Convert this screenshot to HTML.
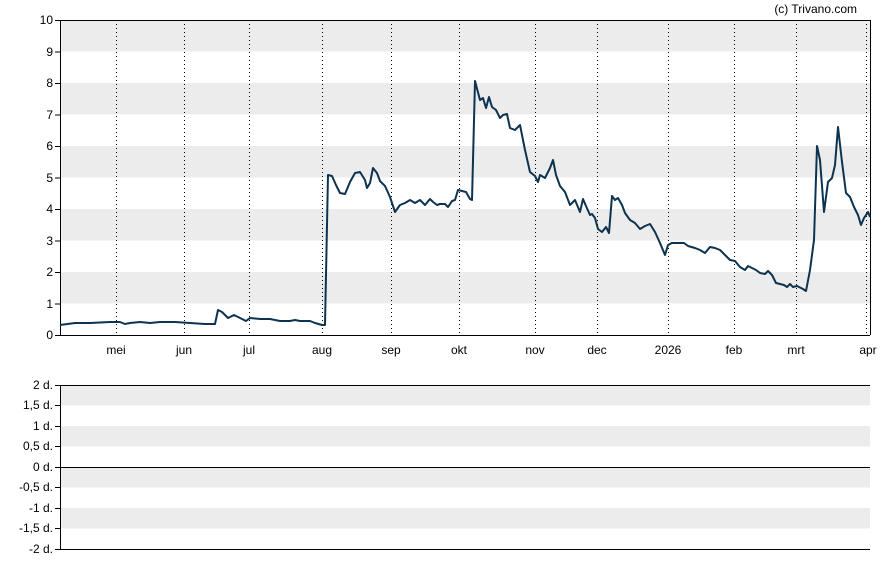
<!DOCTYPE html>
<html><head><meta charset="utf-8"><style>
html,body{margin:0;padding:0;background:#fff;}
svg text{font-family:"Liberation Sans",sans-serif;font-size:12px;fill:#000;}
</style></head><body>
<svg width="888" height="565" viewBox="0 0 888 565" xmlns="http://www.w3.org/2000/svg">
<g fill="#ececec">
<rect x="60" y="20" width="810" height="31.5"/>
<rect x="60" y="83" width="810" height="31.5"/>
<rect x="60" y="146" width="810" height="31.5"/>
<rect x="60" y="209" width="810" height="31.5"/>
<rect x="60" y="272" width="810" height="31.5"/>
<rect x="60" y="385" width="810" height="20.5"/>
<rect x="60" y="426" width="810" height="20.5"/>
<rect x="60" y="467" width="810" height="20.5"/>
<rect x="60" y="508" width="810" height="20.5"/>
</g>
<g stroke="#000" stroke-width="1" stroke-dasharray="1,3">
<line x1="116.5" y1="20" x2="116.5" y2="335"/>
<line x1="184.5" y1="20" x2="184.5" y2="335"/>
<line x1="249.5" y1="20" x2="249.5" y2="335"/>
<line x1="322.5" y1="20" x2="322.5" y2="335"/>
<line x1="391.5" y1="20" x2="391.5" y2="335"/>
<line x1="459.5" y1="20" x2="459.5" y2="335"/>
<line x1="535.5" y1="20" x2="535.5" y2="335"/>
<line x1="597.5" y1="20" x2="597.5" y2="335"/>
<line x1="668.5" y1="20" x2="668.5" y2="335"/>
<line x1="734.5" y1="20" x2="734.5" y2="335"/>
<line x1="796.5" y1="20" x2="796.5" y2="335"/>
<line x1="866.5" y1="20" x2="866.5" y2="335"/>
</g>
<g stroke="#000" stroke-width="1" fill="none">
<path d="M60.5 20V335.5H870M60 20.5H870M870.5 20V335"/>
<path d="M55 20.5h5M55 52h5M55 83.5h5M55 115h5M55 146.5h5M55 178h5M55 209.5h5M55 241h5M55 272.5h5M55 304h5M55 335.5h5"/>
<path d="M60.5 385V549.5H870M60 385.5H870M60 467.5H870"/>
<path d="M55 385.5h5M55 405.5h5M55 426.5h5M55 446.5h5M55 467.5h5M55 487.5h5M55 508.5h5M55 528.5h5M55 549.5h5"/>
</g>
<g text-anchor="end">
<text x="53" y="24">10</text><text x="53" y="56">9</text><text x="53" y="87">8</text><text x="53" y="119">7</text><text x="53" y="150">6</text><text x="53" y="182">5</text><text x="53" y="213">4</text><text x="53" y="245">3</text><text x="53" y="276">2</text><text x="53" y="308">1</text><text x="53" y="339">0</text>
<text x="53" y="389">2 d.</text><text x="53" y="409">1,5 d.</text><text x="53" y="430">1 d.</text><text x="53" y="450">0,5 d.</text><text x="53" y="471">0 d.</text><text x="53" y="491">-0,5 d.</text><text x="53" y="512">-1 d.</text><text x="53" y="532">-1,5 d.</text><text x="53" y="553">-2 d.</text>
<text x="857" y="13">(c) Trivano.com</text>
</g>
<g text-anchor="middle">
<text x="116" y="354">mei</text><text x="184" y="354">jun</text><text x="249" y="354">jul</text><text x="322" y="354">aug</text><text x="391" y="354">sep</text><text x="459" y="354">okt</text><text x="535" y="354">nov</text><text x="597" y="354">dec</text><text x="668" y="354">2026</text><text x="734" y="354">feb</text><text x="796" y="354">mrt</text><text x="868" y="354">apr</text>
</g>
<polyline fill="none" stroke="#0c3350" stroke-width="2" stroke-linejoin="round" points="60,325 75,323 90,323 110,322 120,322 125,324 130,323 140,322 150,323 160,322 175,322 190,323 205,324 215,324 218,310 222,312 228,318 234,315 240,318 246,321 250,318 260,319 270,319 280,321 290,321 295,320 300,321 310,321 315,323 322,325 325,325 328,175 332,176 336,185 340,193 345,194 350,182 355,173 360,172 365,180 367,188 370,183 373,168 377,173 380,181 385,186 390,197 395,212 400,205 405,203 410,200 415,203 420,200 425,205 430,199 433,202 437,205 440,204 445,204 448,207 452,201 455,200 458,190 462,191 466,192 470,199 472,200 475,81 480,100 483,98 486,108 489,97 492,107 496,110 500,118 503,115 507,114 510,128 515,130 520,125 525,150 530,172 535,176 538,182 540,175 545,178 550,168 553,160 556,175 560,186 565,192 570,205 575,200 580,212 583,199 586,206 590,215 592,214 595,218 598,229 602,232 606,227 609,233 612,196 615,200 618,198 622,205 625,213 630,220 635,223 640,229 645,226 650,224 655,232 660,243 665,255 668,245 672,243 678,243 684,243 688,246 695,248 700,250 705,253 710,247 715,248 720,250 725,255 730,260 735,261 740,267 745,270 748,266 752,268 756,270 760,273 765,274 768,271 772,275 776,283 780,284 784,285 787,287 790,284 793,287 797,286 803,289 806,291 810,270 814,240 817,146 820,160 824,212 828,182 832,178 835,165 838,127 842,162 846,193 850,197 854,207 858,215 861,225 864,218 868,212 870,217"/>
</svg>
</body></html>
